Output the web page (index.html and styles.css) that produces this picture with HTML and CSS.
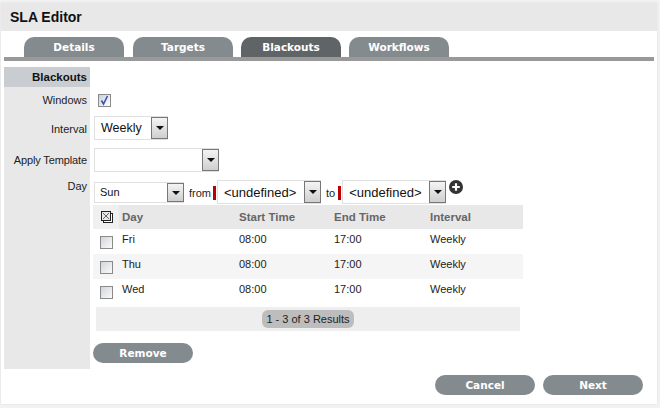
FILE: index.html
```html
<!DOCTYPE html>
<html lang="en">
<head>
<meta charset="utf-8">
<title>SLA Editor</title>
<link rel="stylesheet" href="styles.css">
</head>
<body>
<div class="panel">
  <h1 class="title">SLA Editor</h1>
  <nav class="tabs">
    <a class="tab">Details</a>
    <a class="tab">Targets</a>
    <a class="tab active">Blackouts</a>
    <a class="tab">Workflows</a>
  </nav>
  <div class="form">
    <div class="section-label">Blackouts</div>
    <div class="section-fill"></div>

    <div class="label windows-label">Windows</div>
    <div class="windows-field">
      <span class="check"><svg viewBox="0 0 11 11" width="11" height="11"><path d="M2.5 5.5 L4.5 9 L8.5 1" fill="none" stroke="#3f55a5" stroke-width="1.6"/></svg></span>
    </div>

    <div class="label interval-label">Interval</div>
    <div class="interval-field">
      <div class="select interval"><span class="value">Weekly</span><span class="arrow"></span></div>
    </div>

    <div class="label template-label">Apply Template</div>
    <div class="template-field">
      <div class="select template"><span class="value"></span><span class="arrow"></span></div>
    </div>

    <div class="label day-label">Day</div>
    <div class="day-field">
      <div class="day-row">
        <div class="select day"><span class="value">Sun</span><span class="arrow"></span></div>
        <span class="word from">from</span>
        <span class="required"></span>
        <div class="select time"><span class="value">&lt;undefined&gt;</span><span class="arrow"></span></div>
        <span class="word to">to</span>
        <span class="required"></span>
        <div class="select time"><span class="value">&lt;undefined&gt;</span><span class="arrow"></span></div>
        <svg class="add" viewBox="0 0 14 14" width="14" height="14"><circle cx="7" cy="7" r="7" fill="#333"/><path d="M7 3.2V10.8M3.2 7H10.8" stroke="#fff" stroke-width="2.2"/></svg>
      </div>
      <div class="table">
        <div class="row head">
          <span class="c-check"><svg viewBox="0 0 12 12" width="12" height="12"><rect x="2.5" y="2.5" width="9" height="9" fill="#fff" stroke="#222"/><rect x="0.5" y="0.5" width="9" height="9" fill="#e8e8e8" stroke="#222"/><path d="M2 2L8 8M8 2L2 8" stroke="#444" stroke-width="0.8"/></svg></span>
          <span class="c-day">Day</span><span class="c-start">Start Time</span><span class="c-end">End Time</span><span class="c-int">Interval</span>
        </div>
        <div class="row">
          <span class="c-check"><span class="box"></span></span>
          <span class="c-day">Fri</span><span class="c-start">08:00</span><span class="c-end">17:00</span><span class="c-int">Weekly</span>
        </div>
        <div class="row alt">
          <span class="c-check"><span class="box"></span></span>
          <span class="c-day">Thu</span><span class="c-start">08:00</span><span class="c-end">17:00</span><span class="c-int">Weekly</span>
        </div>
        <div class="row">
          <span class="c-check"><span class="box"></span></span>
          <span class="c-day">Wed</span><span class="c-start">08:00</span><span class="c-end">17:00</span><span class="c-int">Weekly</span>
        </div>
      </div>
      <div class="pager"><span class="results">1 - 3 of 3 Results</span></div>
      <a class="btn remove">Remove</a>
    </div>
  </div>
  <div class="footer">
    <a class="btn">Cancel</a>
    <a class="btn">Next</a>
  </div>
</div>
</body>
</html>
```
FILE: styles.css
```css
* { box-sizing: border-box; }
html, body { margin: 0; padding: 0; }
body {
  width: 660px;
  height: 408px;
  overflow: hidden;
  background: #f2f2f2;
  font-family: "Liberation Sans", Arial, sans-serif;
  font-size: 11px;
  color: #222;
  padding: 3px 3px 4px 1px;
}
.panel {
  width: 656px;
  height: 401px;
  background: #fff;
  box-shadow: 0 0 2px #ddd;
  display: flex;
  flex-direction: column;
}
.title {
  margin: 0;
  height: 28px;
  background: #e8e8e8;
  padding: 0 0 0 9px;
  font-size: 14px;
  line-height: 28px;
  font-weight: bold;
  color: #111;
}
.tabs {
  margin: 6px 3px 0 3px;
  height: 24px;
  padding-left: 20px;
  border-bottom: 4px solid #999;
  display: flex;
  gap: 8px;
}
.tab {
  width: 100px;
  height: 20px;
  background: #848b8f;
  border-radius: 10px 10px 0 0;
  color: #fff;
  font-family: "DejaVu Sans", Verdana, sans-serif;
  font-size: 10.5px;
  font-weight: bold;
  line-height: 21px;
  text-align: center;
}
.tabs .tab:nth-child(2) { margin-left: 1px; }
.tab.active { background: #5f6467; }
.form {
  margin: 6px 0 0 3px;
  display: grid;
  grid-template-columns: 86px 1fr;
  grid-template-rows: 20px 29px 32px 32px 1fr;
  height: 302px;
}
.section-label {
  background: #c9cdd1;
  font-weight: bold;
  font-size: 11.5px;
  line-height: 21px;
  text-align: right;
  padding-right: 3px;
  color: #111;
}
.label {
  background: #e8e8e8;
  text-align: right;
  padding-right: 3px;
  font-size: 11px;
  color: #222;
}
.windows-label { padding-top: 7px; }
.interval-label { padding-top: 7px; }
.template-label { padding-top: 6px; letter-spacing: -0.12px; }
.day-label { padding-top: 0; }
.windows-field { padding: 7px 0 0 8px; }
.interval-field { padding: 0 0 0 4px; }
.template-field { padding: 0 0 0 4px; }
.check {
  display: block;
  width: 13px;
  height: 13px;
  border: 1px solid #8a8a8a;
  background: linear-gradient(135deg, #c9cfe0, #fff);
}
.check svg { display: block; }
.select {
  display: flex;
  align-items: center;
  justify-content: space-between;
  background: #fff;
  border: 1px solid #e0e0e0;
  border-right-width: 0;
}
.value { padding-left: 6px; line-height: 1; color: #111; }
.arrow {
  position: relative;
  flex: none;
  width: 17px;
  align-self: stretch;
  border: 1px solid #777;
  background: linear-gradient(#f4f4f4, #cfcfcf);
}
.arrow::after {
  content: "";
  position: absolute;
  left: 3.5px;
  top: 50%;
  margin-top: -2px;
  border: 4px solid transparent;
  border-top: 4px solid #111;
  border-bottom-width: 0;
}
.interval { width: 74px; height: 24px; }
.interval .value { font-size: 12.5px; padding-left: 6px; }
.template { width: 125px; height: 24px; }
.day-row { display: flex; align-items: flex-start; height: 25px; padding-left: 4px; }
.day { width: 90px; height: 21px; margin-top: 2px; }
.day .value { font-size: 11px; padding-left: 5px; }
.time { width: 104px; height: 24px; }
.time .value { font-size: 13px; padding-left: 6px; }
.word { font-size: 11px; line-height: 24px; margin-top: 1px; }
.from { margin-left: 5px; margin-right: 2px; }
.to { margin-left: 5px; margin-right: 3px; }
.required { width: 3px; height: 14px; margin: 6px 1px 0 0; background: #c00000; }
.add { margin: 0 0 0 3px; }
.table { margin: 0 0 0 3px; width: 430px; }
.row {
  display: grid;
  grid-template-columns: 26px 120px 95px 96px 1fr;
  height: 25px;
  align-items: center;
  padding-bottom: 5px;
  font-size: 11px;
}
.row.alt { background: #f5f5f5; }
.row.head { height: 24px; padding-bottom: 0; background: #e8e8e8; color: #666; font-weight: bold; font-size: 11.5px; }
.row.head .c-check { background: #f0f0f0; height: 24px; display: flex; align-items: center; padding-left: 8px; width: 26px; }
.row.head svg { display: block; }
.c-check { padding-left: 7px; }
.c-day { padding-left: 3px; }
.box {
  display: block;
  width: 13px;
  height: 13px;
  margin-top: 7px;
  border: 1px solid #8a8a8a;
  background: linear-gradient(135deg, #d2d5da, #fafafa);
}
.pager {
  margin: 3px 0 0 6px;
  width: 424px;
  height: 24px;
  background: #eee;
  text-align: center;
  padding-top: 3px;
}
.results {
  display: inline-block;
  height: 18px;
  line-height: 18px;
  padding: 0 4px;
  border-radius: 6px;
  background: #bdbdbd;
  color: #222;
  font-size: 11px;
}
.btn {
  display: block;
  width: 100px;
  height: 20px;
  border-radius: 10px;
  background: #848b8f;
  color: #fff;
  font-family: "DejaVu Sans", Verdana, sans-serif;
  font-size: 10.5px;
  font-weight: bold;
  line-height: 21px;
  text-align: center;
}
.remove { margin: 12px 0 0 3px; }
.footer { display: flex; justify-content: flex-end; gap: 8px; margin: 6px 14px 0 0; }
```
